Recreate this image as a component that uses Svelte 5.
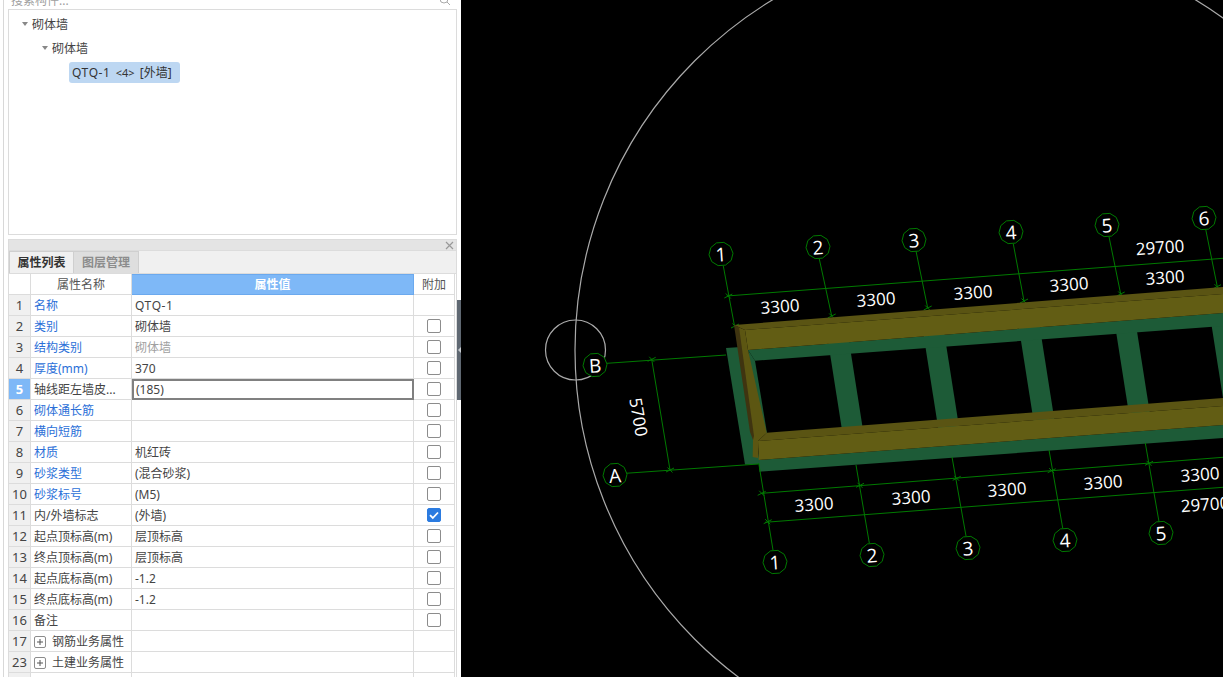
<script lang="ts">
  type Row = { no: number | string; name: string; value?: string; blue?: boolean; check?: boolean; checked?: boolean; muted?: boolean; active?: boolean; group?: boolean; code?: boolean };

  const rows: Row[] = [
    { no: 1, name: "名称", value: "QTQ-1", blue: true, code: true },
    { no: 2, name: "类别", value: "砌体墙", blue: true, check: true },
    { no: 3, name: "结构类别", value: "砌体墙", blue: true, check: true, muted: true },
    { no: 4, name: "厚度(mm)", value: "370", blue: true, check: true },
    { no: 5, name: "轴线距左墙皮...", value: "(185)", check: true, active: true },
    { no: 6, name: "砌体通长筋", blue: true, check: true },
    { no: 7, name: "横向短筋", blue: true, check: true },
    { no: 8, name: "材质", value: "机红砖", blue: true, check: true },
    { no: 9, name: "砂浆类型", value: "(混合砂浆)", blue: true, check: true },
    { no: 10, name: "砂浆标号", value: "(M5)", blue: true, check: true },
    { no: 11, name: "内/外墙标志", value: "(外墙)", check: true, checked: true },
    { no: 12, name: "起点顶标高(m)", value: "层顶标高", check: true },
    { no: 13, name: "终点顶标高(m)", value: "层顶标高", check: true },
    { no: 14, name: "起点底标高(m)", value: "-1.2", check: true },
    { no: 15, name: "终点底标高(m)", value: "-1.2", check: true },
    { no: 16, name: "备注", check: true },
    { no: 17, name: "钢筋业务属性", group: true },
    { no: 23, name: "土建业务属性", group: true },
    { no: "", name: "", group: true },
  ];

  // canvas data, in page pixels (the svg viewBox starts at the canvas' left edge)
  const bubbles = [
    { x: 721, y: 254, t: "1" }, { x: 818, y: 247, t: "2" }, { x: 914, y: 240, t: "3" },
    { x: 1011, y: 232, t: "4" }, { x: 1107, y: 225, t: "5" }, { x: 1204, y: 218, t: "6" },
    { x: 775, y: 562, t: "1" }, { x: 872, y: 555, t: "2" }, { x: 968, y: 548, t: "3" },
    { x: 1065, y: 540, t: "4" }, { x: 1161, y: 533, t: "5" },
    { x: 595, y: 365, t: "B" }, { x: 615, y: 475, t: "A" },
  ];

  const lines = [
    [723.3, 266, 734.5, 326], [819.3, 259, 831.7, 316], [916, 251, 927.7, 308],
    [1013.3, 244, 1024, 301], [1109, 236.7, 1120.7, 294], [1205.7, 229.3, 1217.3, 286.7],
    [726.7, 296, 1223, 258.3],
    [758.7, 463, 773, 550], [856, 465, 869.3, 543], [952, 457, 966, 536],
    [1049, 450, 1062.7, 528], [1145.3, 443, 1159, 521.7],
    [761.7, 493.3, 1223, 457.3], [765, 522.3, 1223, 487.3],
    [607, 363.3, 726, 355], [625.7, 473.3, 758.3, 464], [651.7, 359.3, 670, 470],
  ];

  const ticks = [
    [728.3, 296], [735, 326], [831.7, 316], [927.7, 308], [1024, 301], [1120.7, 294], [1217, 286.7],
    [651.7, 359.3], [670, 470],
    [761.7, 493.3], [860, 485.3], [956.7, 478.3], [1051.7, 470.7], [1149, 463.3], [767.7, 521.7],
  ];

  const labels = [
    { x: 780, y: 306, t: "3300" }, { x: 876, y: 299, t: "3300" }, { x: 973, y: 292, t: "3300" },
    { x: 1069, y: 284, t: "3300" }, { x: 1165, y: 277, t: "3300" }, { x: 1160, y: 247, t: "29700" },
    { x: 814, y: 504, t: "3300" }, { x: 911, y: 497, t: "3300" }, { x: 1007, y: 489, t: "3300" },
    { x: 1103, y: 482, t: "3300" }, { x: 1200, y: 474, t: "3300" }, { x: 1205, y: 504, t: "29700" },
  ];

  const bars = [0, 1, 2, 3, 4].map((i) => {
    const x = 825.5 + 96.5 * i;
    return `${x},325 ${x + 21},325 ${x + 37.5},430 ${x + 16.5},430`;
  });

  function gon(cx: number, cy: number, r = 12, n = 10) {
    const pts = [];
    for (let i = 0; i < n; i++) {
      const a = (Math.PI * 2 * i) / n - 0.07;
      pts.push(`${(cx + r * Math.cos(a)).toFixed(1)},${(cy + r * Math.sin(a)).toFixed(1)}`);
    }
    return pts.join(" ");
  }
</script>

<div class="app">
  <aside class="side">
    <div class="search">
      <span>搜索构件...</span>
      <svg class="lens" width="12" height="12" viewBox="0 0 12 12"><circle cx="5" cy="3" r="4" fill="none" stroke="#aaa" /><path d="M8 6l3 3" stroke="#aaa" /></svg>
    </div>

    <div class="tree">
      <div class="node lvl1"><i class="caret"></i>砌体墙</div>
      <div class="node lvl2"><i class="caret"></i>砌体墙</div>
      <div class="node lvl3"><span class="selected"><span class="code">QTQ-1</span> <small>&lt;4&gt;</small> [外墙]</span></div>
    </div>

    <section class="panel">
      <div class="panel-title">
        <svg width="9" height="9" viewBox="0 0 9 9"><path d="M1 1l7 7M8 1l-7 7" stroke="#999" stroke-width="1.2" /></svg>
      </div>
      <div class="tabs">
        <div class="tab on">属性列表</div>
        <div class="tab">图层管理</div>
      </div>
      <table>
        <colgroup><col class="c1" /><col class="c2" /><col class="c3" /><col class="c4" /></colgroup>
        <thead>
          <tr>
            <th></th>
            <th>属性名称</th>
            <th class="hl">属性值</th>
            <th>附加</th>
          </tr>
        </thead>
        <tbody>
          {#each rows as r}
            <tr>
              <td class="no" class:cur={r.active}>{r.no}</td>
              <td class="name" class:blue={r.blue}>
                {#if r.group}<i class="plus"></i>{/if}{r.name}
              </td>
              <td class="val" class:muted={r.muted} class:active={r.active} class:code={r.code}>{r.value ?? ""}</td>
              <td class="add">
                {#if r.checked}
                  <span class="box checked">
                    <svg width="14" height="14" viewBox="0 0 14 14"><path d="M3 7.2l2.8 2.8L11 4.5" fill="none" stroke="#fff" stroke-width="1.8" /></svg>
                  </span>
                {:else if r.check}
                  <span class="box"></span>
                {/if}
              </td>
            </tr>
          {/each}
        </tbody>
      </table>
    </section>
  </aside>

  <div class="splitter">
    <div class="grip"><i></i></div>
  </div>

  <main class="canvas">
    <svg width="762" height="677" viewBox="461 0 762 677">
      <circle cx="984" cy="350" r="409" class="arc" />
      <circle cx="575.5" cy="350" r="30" class="arc" />

      <!-- left green wall, cross bars, green strips -->
      <polygon class="g" points="726,348 741,347 760,464 745,464.5" />
      {#each bars as b}<polygon class="g" points={b} />{/each}
      <polygon class="g" points="748,350 1223,313 1223,326 755,360.7" />
      <polygon class="g" points="748,350 755,360.7 767,433 760,436" />
      <polygon class="g" points="758.5,460 1223,425 1223,438 759.5,471.7" />

      {#each lines as l}<line x1={l[0]} y1={l[1]} x2={l[2]} y2={l[3]} class="dim" />{/each}
      {#each ticks as t}
        <path d="M{t[0] - 4} {t[1] + 2}L{t[0] + 4} {t[1] - 2}M{t[0] - 2.5} {t[1] - 2.5}L{t[0] + 2.5} {t[1] + 2.5}" class="dim" />
      {/each}

      <!-- yellow top beam -->
      <polygon class="yd" points="734,325 1223,287 1223,294 745,330" />
      <polygon class="y" points="745,330 1223,294 1223,313 748,350" />
      <!-- yellow left column -->
      <polygon class="ys" points="738,327 745,330 748,350 766.7,432.7 758,441 758,458 752.7,457 753,440" />
      <polygon class="yk" points="734,325 739,327 754,436 753,440 750,432" />
      <!-- yellow bottom beam -->
      <polygon class="yd" points="766.7,432.7 1223,398 1223,406 758,441" />
      <polygon class="y" points="758,441 1223,406 1223,425 758.7,460" />

      {#each bubbles as b}
        <polygon points={gon(b.x, b.y)} class="bubble" />
        <text x={b.x} y={b.y + 0.5} class="bt" transform="rotate(-4 {b.x} {b.y})">{b.t}</text>
      {/each}
      {#each labels as l}
        <text x={l.x} y={l.y} class="lb" transform="rotate(-4.2 {l.x} {l.y})">{l.t}</text>
      {/each}
      <text x="639" y="417" class="lb" transform="rotate(80 639 417)">5700</text>
    </svg>
  </main>
</div>

<style>
  :global(body) {
    margin: 0;
    background: #fff;
  }

  .app {
    display: flex;
    height: 677px;
    overflow: hidden;
    font-family: "Noto Sans", "Noto Sans CJK SC", sans-serif;
    font-size: 12px;
    color: #333;
  }

  /* ── Left side ──────────────────────────────────────────── */
  .side {
    width: 457px;
    flex-shrink: 0;
    box-sizing: border-box;
    padding-left: 8px;
    background: linear-gradient(90deg, #fff 3px, #d8d8d8 3px, #d8d8d8 4px, #fff 4px);
  }

  .search {
    height: 9px;
    overflow: hidden;
    display: flex;
    align-items: flex-end;
    justify-content: space-between;
    padding: 0 6px 0 3px;
    color: #a0a0a0;
    line-height: 16px;
    box-sizing: border-box;
  }

  .lens { flex-shrink: 0; margin-bottom: 1px; }

  .tree {
    height: 226px;
    box-sizing: border-box;
    border: 1px solid #dcdcdc;
    padding-top: 2px;
    margin-bottom: 4px;
  }

  .node {
    height: 24px;
    display: flex;
    align-items: center;
    color: #444;
  }

  .lvl1 { padding-left: 13px; }
  .lvl2 { padding-left: 33px; }
  .lvl3 { padding-left: 60px; }

  .caret {
    width: 0;
    height: 0;
    border: 3px solid transparent;
    border-top: 4px solid #888;
    border-bottom: 0;
    margin-right: 4px;
  }

  .selected {
    display: block;
    height: 21px;
    line-height: 21px;
    padding: 0 3px;
    width: 105px;
    background: #bdd7f2;
    border-radius: 3px;
    color: #333;
    white-space: nowrap;
    word-spacing: 2px;
  }

  .selected small { font-size: 11px; }
  .code { letter-spacing: 0.6px; }

  .panel {
    border: 1px solid #dcdcdc;
    border-width: 1px 1px 0 1px;
    height: 439px;
    box-sizing: border-box;
    overflow: hidden;
  }

  .panel-title {
    height: 10px;
    background: #e4e4e4;
    border-bottom: 1px solid #dcdcdc;
    display: flex;
    justify-content: flex-end;
    align-items: center;
    padding-right: 2px;
  }

  .tabs {
    display: flex;
    height: 22px;
    background: #f0f0f0;
    border-bottom: 1px solid #dcdcdc;
  }

  .tab {
    width: 66px;
    box-sizing: border-box;
    text-align: center;
    line-height: 21px;
    font-weight: 600;
    color: #8c8c8c;
    background: #dedede;
    border: 1px solid #cfcfcf;
    border-bottom: 0;
  }

  .tab.on {
    width: 64px;
    color: #333;
    background: #f0f0f0;
    border-right: 0;
  }

  table {
    table-layout: fixed;
    border-collapse: separate;
    border-spacing: 0;
    width: 446px;
  }

  .c1 { width: 22px; }
  .c2 { width: 101px; }
  .c3 { width: 282px; }
  .c4 { width: 41px; }

  th, td {
    height: 21px;
    box-sizing: border-box;
    padding: 0;
    border-right: 1px solid #dcdcdc;
    border-bottom: 1px solid #dcdcdc;
    white-space: nowrap;
    overflow: hidden;
    font-weight: 400;
    line-height: 17px;
  }

  th { text-align: center; color: #555; }

  th.hl {
    background: #7eb8f7;
    color: #fff;
    font-weight: 700;
    border-right-color: #6ba9ee;
    border-bottom-color: #6ba9ee;
    border-top: 1px solid #6ba9ee;
  }

  .no {
    text-align: center;
    background: #f0f0f0;
    color: #444;
    font-size: 13px;
  }

  .no.cur {
    background: #7eb8f7;
    color: #fff;
    font-weight: 700;
  }

  .name { padding-left: 3px; color: #444; }
  .name.blue { color: #2b6fd8; }
  .val { padding-left: 3px; color: #444; }
  .val.muted { color: #a0a0a0; }

  .val.active {
    border: 2px solid #808080;
    padding-left: 2px;
    background: #fff;
  }

  .add { text-align: center; line-height: 0; }

  .box {
    display: inline-block;
    width: 14px;
    height: 14px;
    box-sizing: border-box;
    border: 1px solid #8c8c8c;
    border-radius: 2px;
    background: #fff;
    vertical-align: middle;
  }

  .box.checked {
    background: #2b7be0;
    border-color: #2b7be0;
  }

  .box.checked svg {
    display: block;
    margin: -1px;
  }

  .plus {
    display: inline-block;
    position: relative;
    width: 12px;
    height: 12px;
    box-sizing: border-box;
    border: 1px solid #8c8c8c;
    border-radius: 2px;
    margin-right: 6px;
    vertical-align: -2px;
  }

  .plus::before, .plus::after {
    content: "";
    position: absolute;
    background: #555;
  }

  .plus::before { left: 2px; top: 4px; width: 6px; height: 2px; transform: scaleY(.5); }
  .plus::after { left: 4px; top: 2px; width: 2px; height: 6px; transform: scaleX(.5); }

  /* ── Splitter ───────────────────────────────────────────── */
  .splitter {
    width: 4px;
    flex-shrink: 0;
    padding-top: 300px;
    box-sizing: border-box;
  }

  .grip {
    height: 100px;
    background: #5f6872;
    display: flex;
    align-items: center;
  }

  .grip i {
    width: 0;
    height: 0;
    border: 3px solid transparent;
    border-right: 3px solid #c8ccd0;
    border-left: 0;
    margin-left: 0.5px;
  }

  /* ── CAD canvas ─────────────────────────────────────────── */
  .canvas {
    flex: 1;
    background: #000;
    min-width: 0;
  }

  .canvas svg { display: block; }

  .arc { fill: none; stroke: #aaa; stroke-width: 1.2; }
  .dim { fill: none; stroke: #007a00; stroke-width: 1; }
  .bubble { fill: #000; stroke: #007a00; stroke-width: 1; }
  .g { fill: #1d5b37; }
  .y { fill: #625d14; }
  .yd { fill: #5a5413; }
  .ys { fill: #5c5612; }
  .yk { fill: #3f3410; }

  .bt, .lb {
    fill: #fff;
    text-anchor: middle;
    dominant-baseline: central;
    font-family: "Open Sans", "Noto Sans", sans-serif;
  }

  .bt { font-size: 19px; }
  .lb { font-size: 17px; }
</style>
